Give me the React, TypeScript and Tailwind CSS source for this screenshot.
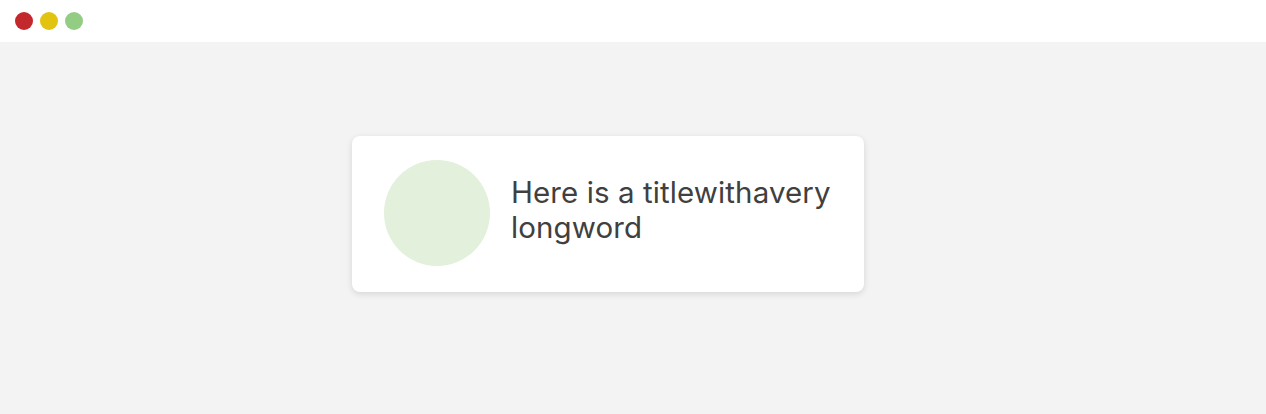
import React from "react";

export default function App() {
  return (
    <div className="w-[1266px] h-[414px] bg-[#f3f3f3] flex flex-col" style={{ fontFamily: "Inter, 'Noto Sans', sans-serif" }}>
      <div className="h-[42px] bg-white flex items-center gap-[7px] pl-[15px] shrink-0">
        <span className="w-[18px] h-[18px] rounded-full bg-[#c3282d]"></span>
        <span className="w-[18px] h-[18px] rounded-full bg-[#e2c30f]"></span>
        <span className="w-[18px] h-[18px] rounded-full bg-[#93cd83]"></span>
      </div>
      <div className="pl-[352px] pt-[94px]">
        <div className="w-[512px] h-[156px] bg-white rounded-lg shadow-[0_2px_6px_rgba(0,0,0,0.12)] flex items-center pl-[32px] pr-[32px] gap-[21px]">
          <div className="w-[106px] h-[106px] rounded-full bg-[#e2f0dc] shrink-0 mb-[2px]"></div>
          <h1 className="text-[29.5px] leading-[35px] text-[#404040] font-normal mb-[8px] tracking-[0.1px]">Here is a titlewithavery longword</h1>
        </div>
      </div>
    </div>
  );
}
